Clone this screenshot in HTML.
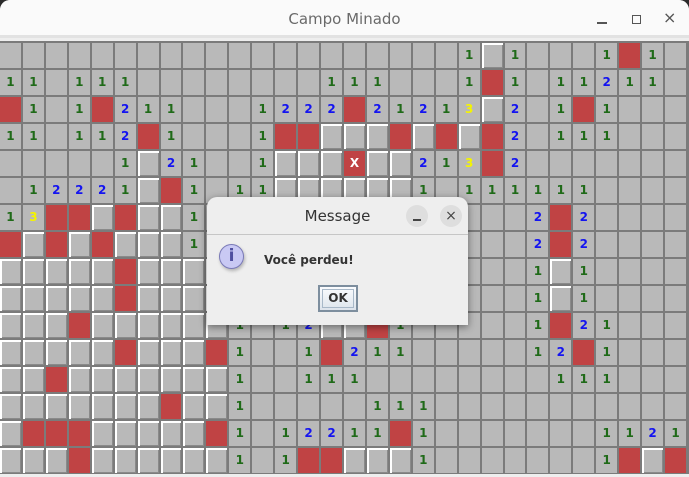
<!DOCTYPE html>
<html><head><meta charset="utf-8"><style>
*{margin:0;padding:0;box-sizing:border-box}
html,body{width:689px;height:477px;overflow:hidden;background:#2b2b2b}
#win{position:absolute;left:0;top:0;width:689px;height:477px;background:#eeeeee;border-radius:10px 10px 0 0;overflow:hidden}
#tb{position:absolute;left:0;top:0;width:689px;height:38px;background:#fafafa;border-bottom:3px solid #e2e2e2}
#tt{position:absolute;left:0;width:689px;top:10px;text-align:center;font:15px "DejaVu Sans","Liberation Sans",sans-serif;color:#6a6a6a}
#g{position:absolute;left:0;top:41px;width:689px;height:433px;background:#7b7b7b;padding:2px 3px 2px 0;display:grid;grid-template-columns:repeat(30,1fr);grid-template-rows:repeat(16,1fr);gap:2px}
#g i,#g b{display:block;background:#b9b9b9;font:bold 12px/25px "DejaVu Sans","Liberation Sans",sans-serif;text-align:center}
#g .u{box-shadow:inset 2px 2px 0 #fff,inset -1px -1px 0 #8a8a8a}
#g .m{background:#c04344}
#g .a{color:#1f6a18}
#g .b{color:#1414f0}
#g .c{color:#f4f400}
#g .x{background:#c04344;color:#fff}
#dlg{position:absolute;left:207px;top:197px;width:261px;height:128px;background:#eeeeee;border-radius:10px 10px 0 0;box-shadow:0 2px 8px rgba(0,0,0,.45)}
#dt{position:absolute;left:0;top:0;width:261px;height:38px;border-bottom:1px solid #c6c6c6;text-align:center;font:15px/38px "DejaVu Sans","Liberation Sans",sans-serif;color:#333}
.cb{position:absolute;top:8px;width:22px;height:22px;border-radius:50%;background:#dedede}
#ic{position:absolute;left:12px;top:47px;width:25px;height:25px;border-radius:50%;background:#c9c9f4;border:1.5px solid #7a7ab8;box-shadow:1px 2px 3px rgba(0,0,0,.25);text-align:center;font:bold 17px/22px "DejaVu Sans",sans-serif;color:#5050a0}
#msg{position:absolute;left:57px;top:56px;font:bold 12px "DejaVu Sans","Liberation Sans",sans-serif;color:#333}
#ok{position:absolute;left:111px;top:88px;width:40px;height:27px;border:2px solid #7d8e9e;background:linear-gradient(#fafcfe,#dde4ec);}
#ok span{position:absolute;left:2px;top:2px;width:32px;height:19px;border:1px solid #a8b8c8;font:bold 12px/17px "DejaVu Sans",sans-serif;color:#333;text-align:center}
</style></head><body><div id="win">
<div id="tb"><div id="tt">Campo Minado</div>
<div style="position:absolute;left:597px;top:22px;width:10px;height:1.5px;background:#555"></div>
<div style="position:absolute;left:632px;top:15px;width:9px;height:9px;border:1.5px solid #555"></div>
<div style="position:absolute;left:663px;top:8px;font:16px 'DejaVu Sans',sans-serif;color:#555">×</div>
</div>
<div id="g">
<i></i><i></i><i></i><i></i><i></i><i></i><i></i><i></i><i></i><i></i><i></i><i></i><i></i><i></i><i></i><i></i><i></i><i></i><i></i><i></i><b class=a>1</b><i class=u></i><b class=a>1</b><i></i><i></i><i></i><b class=a>1</b><i class=m></i><b class=a>1</b><i></i>
<b class=a>1</b><b class=a>1</b><i></i><b class=a>1</b><b class=a>1</b><b class=a>1</b><i></i><i></i><i></i><i></i><i></i><i></i><i></i><i></i><b class=a>1</b><b class=a>1</b><b class=a>1</b><i></i><i></i><i></i><b class=a>1</b><i class=m></i><b class=a>1</b><i></i><b class=a>1</b><b class=a>1</b><b class=b>2</b><b class=a>1</b><b class=a>1</b><i></i>
<i class=m></i><b class=a>1</b><i></i><b class=a>1</b><i class=m></i><b class=b>2</b><b class=a>1</b><b class=a>1</b><i></i><i></i><i></i><b class=a>1</b><b class=b>2</b><b class=b>2</b><b class=b>2</b><i class=m></i><b class=b>2</b><b class=a>1</b><b class=b>2</b><b class=a>1</b><b class=c>3</b><i class=u></i><b class=b>2</b><i></i><b class=a>1</b><i class=m></i><b class=a>1</b><i></i><i></i><i></i>
<b class=a>1</b><b class=a>1</b><i></i><b class=a>1</b><b class=a>1</b><b class=b>2</b><i class=m></i><b class=a>1</b><i></i><i></i><i></i><b class=a>1</b><i class=m></i><i class=m></i><i class=u></i><i class=u></i><i class=u></i><i class=m></i><i class=u></i><i class=m></i><i class=u></i><i class=m></i><b class=b>2</b><i></i><b class=a>1</b><b class=a>1</b><b class=a>1</b><i></i><i></i><i></i>
<i></i><i></i><i></i><i></i><i></i><b class=a>1</b><i class=u></i><b class=b>2</b><b class=a>1</b><i></i><i></i><b class=a>1</b><i class=u></i><i class=u></i><i class=u></i><b class=x>X</b><i class=u></i><i class=u></i><b class=b>2</b><b class=a>1</b><b class=c>3</b><i class=m></i><b class=b>2</b><i></i><i></i><i></i><i></i><i></i><i></i><i></i>
<i></i><b class=a>1</b><b class=b>2</b><b class=b>2</b><b class=b>2</b><b class=a>1</b><i class=u></i><i class=m></i><b class=a>1</b><i></i><b class=a>1</b><b class=a>1</b><i class=u></i><i class=u></i><i class=u></i><i class=u></i><i class=u></i><i class=u></i><b class=a>1</b><i></i><b class=a>1</b><b class=a>1</b><b class=a>1</b><b class=a>1</b><b class=a>1</b><b class=a>1</b><i></i><i></i><i></i><i></i>
<b class=a>1</b><b class=c>3</b><i class=m></i><i class=m></i><i class=u></i><i class=m></i><i class=u></i><i class=u></i><b class=a>1</b><i></i><i></i><i></i><i></i><i></i><i></i><i></i><i></i><i></i><i></i><i></i><i></i><i></i><i></i><b class=b>2</b><i class=m></i><b class=b>2</b><i></i><i></i><i></i><i></i>
<i class=m></i><i class=u></i><i class=m></i><i class=u></i><i class=m></i><i class=u></i><i class=u></i><i class=u></i><b class=a>1</b><i></i><i></i><i></i><i></i><i></i><i></i><i></i><i></i><i></i><i></i><i></i><i></i><i></i><i></i><b class=b>2</b><i class=m></i><b class=b>2</b><i></i><i></i><i></i><i></i>
<i class=u></i><i class=u></i><i class=u></i><i class=u></i><i class=u></i><i class=m></i><i class=u></i><i class=u></i><i class=u></i><i class=u></i><i></i><i></i><i></i><i></i><i></i><i></i><i></i><i></i><i></i><i></i><i></i><i></i><i></i><b class=a>1</b><i class=u></i><b class=a>1</b><i></i><i></i><i></i><i></i>
<i class=u></i><i class=u></i><i class=u></i><i class=u></i><i class=u></i><i class=m></i><i class=u></i><i class=u></i><i class=u></i><i class=u></i><i></i><i></i><i></i><i></i><i></i><i></i><i></i><i></i><i></i><i></i><i></i><i></i><i></i><b class=a>1</b><i class=u></i><b class=a>1</b><i></i><i></i><i></i><i></i>
<i class=u></i><i class=u></i><i class=u></i><i class=m></i><i class=u></i><i class=u></i><i class=u></i><i class=u></i><i class=u></i><i class=u></i><b class=a>1</b><i></i><b class=a>1</b><b class=b>2</b><i class=u></i><i class=u></i><i class=m></i><b class=a>1</b><i></i><i></i><i></i><i></i><i></i><b class=a>1</b><i class=m></i><b class=b>2</b><b class=a>1</b><i></i><i></i><i></i>
<i class=u></i><i class=u></i><i class=u></i><i class=u></i><i class=u></i><i class=m></i><i class=u></i><i class=u></i><i class=u></i><i class=m></i><b class=a>1</b><i></i><i></i><b class=a>1</b><i class=m></i><b class=b>2</b><b class=a>1</b><b class=a>1</b><i></i><i></i><i></i><i></i><i></i><b class=a>1</b><b class=b>2</b><i class=m></i><b class=a>1</b><i></i><i></i><i></i>
<i class=u></i><i class=u></i><i class=m></i><i class=u></i><i class=u></i><i class=u></i><i class=u></i><i class=u></i><i class=u></i><i class=u></i><b class=a>1</b><i></i><i></i><b class=a>1</b><b class=a>1</b><b class=a>1</b><i></i><i></i><i></i><i></i><i></i><i></i><i></i><i></i><b class=a>1</b><b class=a>1</b><b class=a>1</b><i></i><i></i><i></i>
<i class=u></i><i class=u></i><i class=u></i><i class=u></i><i class=u></i><i class=u></i><i class=u></i><i class=m></i><i class=u></i><i class=u></i><b class=a>1</b><i></i><i></i><i></i><i></i><i></i><b class=a>1</b><b class=a>1</b><b class=a>1</b><i></i><i></i><i></i><i></i><i></i><i></i><i></i><i></i><i></i><i></i><i></i>
<i class=u></i><i class=m></i><i class=m></i><i class=m></i><i class=u></i><i class=u></i><i class=u></i><i class=u></i><i class=u></i><i class=m></i><b class=a>1</b><i></i><b class=a>1</b><b class=b>2</b><b class=b>2</b><b class=a>1</b><b class=a>1</b><i class=m></i><b class=a>1</b><i></i><i></i><i></i><i></i><i></i><i></i><i></i><b class=a>1</b><b class=a>1</b><b class=b>2</b><b class=a>1</b>
<i class=u></i><i class=u></i><i class=u></i><i class=m></i><i class=u></i><i class=u></i><i class=u></i><i class=u></i><i class=u></i><i class=u></i><b class=a>1</b><i></i><b class=a>1</b><i class=m></i><i class=m></i><i class=u></i><i class=u></i><i class=u></i><b class=a>1</b><i></i><i></i><i></i><i></i><i></i><i></i><i></i><b class=a>1</b><i class=m></i><i class=u></i><i class=m></i>
</div>
<div id="dlg">
<div id="dt">Message</div>
<div class="cb" style="left:199px"><div style="position:absolute;left:7px;top:14px;width:8px;height:1.5px;background:#444"></div></div>
<div class="cb" style="left:233px;text-align:center;font:14px/22px 'DejaVu Sans',sans-serif;color:#444">×</div>
<div id="ic">i</div>
<div id="msg">Você perdeu!</div>
<div id="ok"><span>OK</span></div>
</div>
</div></body></html>
